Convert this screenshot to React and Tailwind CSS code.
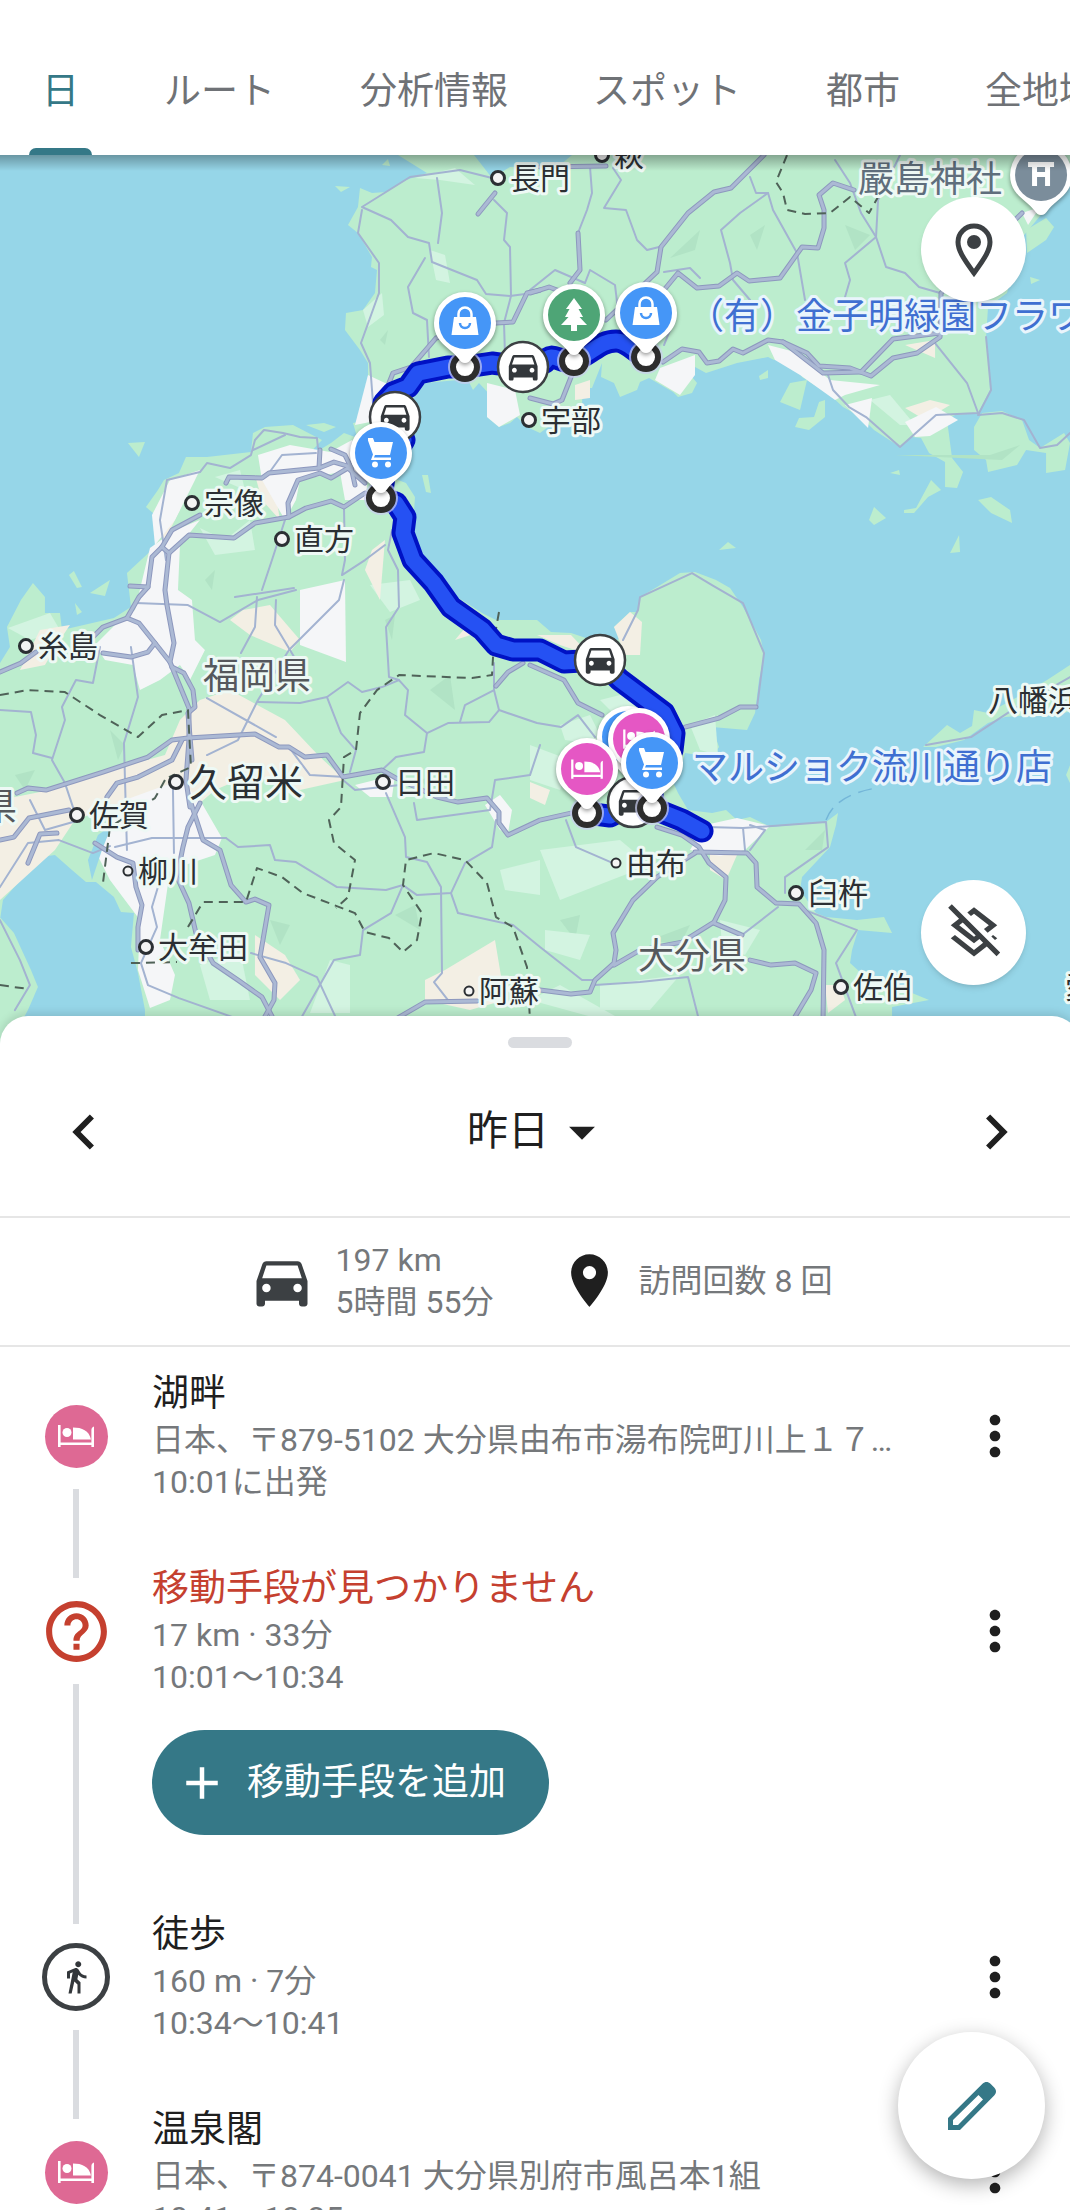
import {
  MdAdd, MdArrowDropDown, MdChevronLeft, MdChevronRight, MdDirectionsCar, MdDirectionsWalk,
  MdHelpOutline, MdLocationOn, MdMoreVert, MdOutlineLayersClear,
} from 'react-icons/md';

const TABS = ['日', 'ルート', '分析情報', 'スポット', '都市', '全地域'];

const TIMELINE = [
  { kind: 'hotel', title: '湖畔', lines: ['日本、〒879-5102 大分県由布市湯布院町川上１７…', '10:01に出発'] },
  { kind: 'unknown', title: '移動手段が見つかりません', lines: ['17 km · 33分', '10:01〜10:34'], action: '移動手段を追加' },
  { kind: 'walk', title: '徒歩', lines: ['160 m · 7分', '10:34〜10:41'] },
  { kind: 'hotel', title: '温泉閣', lines: ['日本、〒874-0041 大分県別府市風呂本1組', '10:41〜18:35'] },
];

/* ---------- map data ---------- */

const LAND = [
  // Yamaguchi
  '398,155 427,173 406,180 386,192 372,193 360,188 358,207 348,225 358,233 372,257 371,267 377,270 375,293 363,310 346,313 345,330 360,350 368,363 368,383 372,403 370,420 353,423 358,440 385,440 405,410 425,383 458,380 468,380 473,390 479,383 492,397 487,417 499,427 510,423 517,417 527,427 540,433 552,424 564,413 582,403 583,388 592,388 602,363 601,377 614,383 620,397 637,390 640,382 649,378 673,392 678,397 692,393 697,383 692,377 695,367 706,373 737,363 768,357 774,360 792,358 802,377 830,395 843,407 861,417 874,430 900,447 912,437 921,438 929,453 945,462 945,487 957,488 963,472 952,458 947,420 955,415 978,413 990,390 988,357 986,337 988,307 1007,293 1020,240 1070,180 1070,155 572,155 560,165 510,167 492,178 474,155',
  // Kyushu
  '355,437 344,433 331,443 303,460 322,440 293,425 265,427 253,433 251,452 207,457 186,457 179,473 164,480 158,490 146,507 153,513 155,530 155,547 127,573 131,607 114,618 62,630 60,613 45,613 45,597 33,583 21,600 7,627 10,647 0,663 0,920 3,900 41,857 55,855 72,870 86,882 96,882 114,897 121,912 134,913 131,947 138,973 145,1010 145,1061 892,1061 892,1007 929,1000 912,993 861,973 850,963 852,950 858,930 892,933 884,917 857,920 826,917 816,913 800,890 802,877 830,847 836,825 838,813 826,822 771,827 750,817 737,820 726,810 712,813 688,810 678,793 672,780 681,767 685,753 712,757 719,747 712,727 747,730 755,713 759,680 764,655 761,640 743,607 730,588 716,580 695,572 680,573 657,587 640,597 638,612 630,612 614,627 621,637 613,643 592,640 571,633 551,632 537,620 496,620 482,613 451,593 424,560 413,527 415,497 406,483 372,470',
  // Shimabara, Sadamisaki, Yashiro
  '0,917 14,933 31,970 38,987 28,1010 0,1061',
  '923,747 947,725 960,733 972,726 974,710 988,713 1012,700 1047,680 1070,665 1070,712 1005,717 988,723 964,740 936,747',
  '974,427 982,413 1002,411 1022,420 1029,440 1040,448 1064,433 1070,443 1065,470 1046,473 1046,453 1026,450 1017,465 988,472 986,460 974,450',
  // small islands
  '978,500 991,497 1010,510 1012,523 991,513', '869,520 874,507 886,518 874,525',
  '904,510 916,508 931,480 941,490 928,497 914,513 904,513', '890,473 899,470 900,475',
  '950,553 959,535 960,552', '719,550 728,542 736,548', '780,402 790,383 807,380 800,410',
  '795,427 799,418 814,417 819,402 825,400 825,417 809,430', '759,376 768,370 768,378 760,380',
  '1026,230 1046,218 1054,227 1046,240 1027,253', '128,443 145,442 139,457', '306,425 324,423 336,427 324,432',
  '422,475 428,475 431,493 426,492', '335,186 350,187 341,192', '382,165 388,159 390,166',
  '69,575 74,571 82,587 77,588', '75,603 82,612 77,615', '1030,277 1040,280 1031,284', '90,593 110,580 105,596', '1066,775 1070,765 1070,783',
];

// towns and plains
const URBAN = [
  '258,455 290,445 330,452 352,440 368,470 366,500 345,500 340,472 300,480 296,500 285,520 262,480',
  '150,548 175,530 200,520 180,545 178,590 192,600 195,640 205,650 190,680 180,665 160,680 140,690 133,665 105,660 95,645 115,625 135,610',
  '125,800 180,780 200,800 222,838 215,855 170,870 165,905 160,940 175,975 170,1000 150,1008 138,970 140,920 110,880 95,850',
  '705,825 737,818 770,826 745,850 720,856 690,850', '300,590 345,580 346,662 300,645',
  '768,345 795,352 830,380 880,385 845,395 835,400 800,375 775,360', '845,405 872,398 868,428', '905,422 936,407 958,420 930,436 915,437',
  '660,368 695,355 695,375 680,395 655,380', '487,383 515,390 520,415 499,427 487,417', '368,375 400,390 380,420 355,425', '1022,213 1040,207 1028,225',
  '500,795 485,805 500,830 508,833 512,810', '355,785 395,775 392,797 370,797', '170,480 200,470 175,520 155,545 152,515',
];
const CREAM = [
  '0,800 50,790 110,770 165,755 180,720 200,700 230,690 285,720 318,755 345,780 300,790 250,775 215,790 200,803 130,800 75,820 55,850 0,900',
  '70,625 60,640 45,665 20,670 40,630', '243,610 270,605 300,640 290,652 250,635 230,620', '480,632 455,640 470,622',
  '425,980 445,970 495,940 505,1000 470,1010 425,1000', '255,935 285,955 300,980 280,1000 255,975',
  '614,627 630,612 642,622 640,655 625,655', '530,782 550,790 545,805 530,798', '825,985 840,985 845,1000 828,1013',
  '710,850 737,855 726,880 710,870', '537,635 571,635 590,655 560,645', '905,408 930,400 950,405 925,420', '255,475 275,490 280,520 262,500',
  '575,385 590,380 590,398 575,400', '905,345 935,340 935,358', '165,500 180,510 165,540 157,530', '372,550 385,540 380,600 365,570',
];
const PALE = [
  '415,178 455,168 475,185 440,180', '363,310 382,293 384,315 368,327', '430,250 445,255 450,283 436,280', '215,477 240,470 245,490',
  '200,528 225,540 250,520 255,550 215,555', '8,628 50,613 60,630 30,640', '370,585 410,580 420,600 390,612', '560,725 590,715 605,745 565,740',
  '530,745 570,760 560,790 530,780', '540,850 620,840 650,865 560,900', '545,930 590,935 580,960 545,950', '600,985 680,975 650,1010 600,1010',
  '690,725 715,715 718,755 700,750', '870,400 890,395 915,425 900,425', '500,870 540,860 540,895 505,890', '640,1030 530,1000 560,985',
  '200,965 240,950 250,1000 210,1000', '720,920 760,930 745,955 722,945', '330,960 350,965 350,1013 310,1013', '600,700 640,690 650,715 620,720',
];
const SHADE = [
  '670,258 700,230 695,250', '845,225 870,235 855,250', '380,340 388,330 385,345', '750,235 765,225 757,250', '895,455 990,455 1020,445 1002,460',
  '205,580 215,570 212,590', '385,620 395,615 392,640', '430,690 450,675 455,710', '110,730 125,745 118,760', '15,775 35,770 25,790',
  '420,780 450,770 440,800', '270,920 290,925 280,945', '395,915 415,905 420,930', '805,850 825,830 822,850', '650,940 690,925 680,945', '560,920 580,915 575,940',
];

const MAJOR_ROADS = [
  '540,290 527,293 513,322 496,323 470,330 436,338 411,367 393,373 389,383', '495,193 478,214',
  '764,155 731,188 714,192 688,213 661,247 657,272 606,320',
  '664,290 678,273 697,288 719,286 737,273 749,281 780,278 802,247 818,248 824,228 824,210 819,195 833,183 854,190',
  '663,362 682,349 699,352 707,363 719,361 733,349 743,353 768,340 783,342 807,353 819,366 850,368 871,376 893,358 917,353 940,337 941,293 1022,213',
  '783,342 823,373 861,372 893,339 940,333', '578,233 580,270 570,283', '530,293 549,287 565,293', '540,167 606,166', '530,398 553,404 562,400 573,372',
  '226,483 229,477 262,478 269,473 319,468 334,462 351,467', '289,517 288,503 298,480 320,473 331,478 348,468 365,483', '320,450 319,468', '331,449 345,455 351,467 355,485',
  '162,547 172,530 200,515', '162,547 169,553 189,535 234,538 255,523 289,517 306,508 331,501 344,507 365,493',
  '169,553 165,590 167,605 174,643 170,662 189,708 189,740 186,780 190,807',
  '162,547 152,557 148,587 139,597 127,618 139,623 155,643 170,662', '172,667 184,673 193,690 195,707 188,713 192,760', '130,586 148,587',
  '127,618 103,627 93,637', '103,653 131,657 148,652 155,643', '0,672 21,663 36,652',
  '17,793 28,788 46,790 103,772 148,757 172,740 188,738 255,734 279,747 289,747 305,757 327,755 343,777 382,770 396,778 437,797 458,802 487,798 499,812 499,823 508,835 540,820 571,813',
  '0,840 14,837 29,818 69,810', '107,797 117,783 138,777 172,760 182,740',
  '189,797 203,840 220,850 231,885 246,902 255,899 269,905 260,957 275,983 274,1000 263,1020',
  '200,803 188,827 183,847 177,877 189,903 196,933 213,963 238,980 262,997 274,1020',
  '95,843 117,857 133,863 136,887 142,905 138,927 138,950', '57,833 40,834 28,863', '394,1020 425,1002 477,1001',
  '540,990 571,994 590,992 595,980 614,963 616,950 613,933 633,900 657,877 695,853',
  '614,965 640,950 682,942 714,922 725,900 726,877 709,863 699,847 682,835 657,827', '714,923 742,935',
  '695,852 747,853 756,863 757,887 776,903 799,904 816,923 824,950 823,1020', '750,960 771,965 795,963 816,973 811,990 793,1020',
  '530,665 564,680 578,703 602,715', '685,727 719,718 740,707 756,707', '496,686 508,672 523,663',
];
const MINOR_ROADS = [
  '492,178 460,170 410,177 362,207 391,220 408,237 429,243 432,262 477,280 486,294 510,296 540,292', '437,178 442,213 438,243',
  '362,210 358,233 379,263 379,293 361,343 370,363 373,403', '425,258 408,287 413,313 427,320 429,357', '494,200 507,213 504,240 510,247 511,296 504,323 505,355',
  '590,167 592,193 587,210 578,233', '613,168 621,180 604,208 626,210 637,240 647,250 659,247', '530,290 555,270 585,283 590,270 615,285 618,310',
  '750,177 756,193 768,193 740,213 721,230 730,263 733,280 750,300', '768,193 773,210 797,253 805,300', '664,272 690,268 700,278', '664,345 672,325',
  '835,160 850,183 861,213 876,237 845,263 850,280 845,297', '900,155 878,200 876,237 886,267 905,273 919,287 940,293',
  '828,375 833,390 849,407 866,417 900,447 936,415 978,413 967,383 935,343', '986,337 991,390 978,415 1002,413 1024,420 1040,448 1057,445 1070,433',
  '166,560 160,520 167,480 200,472 207,463 230,468 251,455 255,440 264,430 283,433 300,437 317,438 318,448', '253,450 285,435', '269,473 282,455 316,453',
  '136,603 188,605 220,622 258,600 296,590', '235,597 294,588', '257,597 255,627 241,653', '344,580 339,600 289,650 258,700 238,740 207,755',
  '207,698 276,737', '258,702 300,703 327,697 348,682 362,692 382,687 399,680 389,677 386,627 399,607 398,570 388,550 392,530', '327,697 341,733 356,750 350,772',
  '344,507 345,560 342,575 365,560 385,545', '262,590 272,560 285,520', '276,600 275,625 296,660',
  '399,680 408,690 405,715 427,733 424,752 396,757 382,770', '427,733 448,723 489,722 499,710 537,723 561,727 578,715 595,737', '494,663 494,690 499,710', '494,690 465,705 460,722',
  '386,793 405,837 406,857 427,862 441,887 442,973 434,982 448,1000', '540,745 530,775 495,780 490,810 417,820 414,803',
  '226,838 238,847 270,845 275,860 296,862 337,887 386,890 403,885 417,895 451,893 465,863 492,847 496,820',
  '451,893 458,913 513,925 540,947 582,980 595,980', '403,885 391,913 363,930 360,955 334,960 300,1020', '251,953 286,963 317,977 337,1020',
  '141,963 148,985 179,998 241,1020', '100,647 93,683 76,680 62,707 65,720 52,760 65,783 74,810', '0,710 31,712 36,735 33,753 52,758',
  '131,647 138,697 124,743 127,850', '173,790 174,853', '115,847 152,838 226,838', '0,887 28,843 59,840 93,853 110,846', '158,887 152,907 157,927 141,963', '30,800 45,830 80,820',
  '566,820 576,847 613,863', '623,640 638,610 640,597 692,573 712,585 743,603 764,653 757,707', '706,827 743,828 826,822 828,847 785,877 785,893',
  '750,850 765,830 750,825', '743,828 745,850', '805,910 857,930 836,963 857,1020', '595,985 640,982 688,977 699,1020', '742,935 778,907', '926,745 971,737 1012,710 1070,677',
  '0,920 20,960 30,985 15,1010', '343,780 355,790 400,785', '289,747 310,775 345,777',
];
const BORDERS = [
  '787,155 776,182 783,193 787,210 805,214 830,213 850,197 869,213 878,197',
  '0,695 28,690 65,692 100,715 138,737 162,715 188,710 191,767 169,777', '165,780 155,798 110,827 103,883',
  '499,612 494,640 492,675 472,678 399,675 377,690 360,713 356,750 344,757 341,807 329,820 334,843 355,860 348,897 336,908',
  '188,927 203,902 246,902 257,868 282,877 303,893 355,913 365,932 389,938 403,952 417,940 422,913 403,885 406,860 434,853 465,860 487,883 496,917 513,927 527,967 530,1020',
  '0,985 29,989', '131,963 177,962',
];

const TOWNS = [
  { x: 498, y: 178, name: '長門' }, { x: 602, y: 155, name: '萩' }, { x: 529, y: 420, name: '宇部' },
  { x: 192, y: 503, name: '宗像' }, { x: 282, y: 539, name: '直方' }, { x: 26, y: 646, name: '糸島' },
  { x: 77, y: 815, name: '佐賀' }, { x: 146, y: 947, name: '大牟田' }, { x: 383, y: 782, name: '日田' },
  { x: 796, y: 893, name: '臼杵' }, { x: 841, y: 987, name: '佐伯' },
  { x: 128, y: 871, name: '柳川', small: true }, { x: 469, y: 991, name: '阿蘇', small: true }, { x: 616, y: 863, name: '由布', small: true },
];

const ROUTE = 'M646 357C634 352 628 341 616 341C600 341 594 352 574 361C560 364 552 350 545 362L523 367L492 363L465 367L448 367L418 373L408 387L393 393L384 403L395 417L404 440L385 470L381 498L396 503L405 517L403 533L413 560L434 583L451 607L482 629L496 645L513 650L540 650L564 662L600 660L620 680L664 713L674 733L672 750L652 785L652 808';
const ROUTE_SOUTH = 'M587 813L610 816L633 804L652 808L682 820L702 831';

/* ---------- map pieces ---------- */

const CAR = 'M18.92 6.01C18.72 5.42 18.16 5 17.5 5h-11c-.66 0-1.21.42-1.42 1.01L3 12v8c0 .55.45 1 1 1h1c.55 0 1-.45 1-1v-1h12v1c0 .55.45 1 1 1h1c.55 0 1-.45 1-1v-8l-2.08-5.99zM6.5 16c-.83 0-1.5-.67-1.5-1.5S5.67 13 6.5 13s1.5.67 1.5 1.5S7.33 16 6.5 16zm11 0c-.83 0-1.5-.67-1.5-1.5s.67-1.5 1.5-1.5 1.5.67 1.5 1.5-.67 1.5-1.5 1.5zM5 11l1.5-4.500h11L19 11H5z';

function BedShape() {
  return (
    <g fill="currentColor">
      <path d="M-18-11h2.600V6.500h30.800V-6C15.400-8 16.500-9 18-9.500V11h-2.600V9h-30.800v2H-18z" />
      <circle cx="-9" cy="-3.500" r="4.500" />
      <path d="M-3-8.500C6-8.500 13-5.500 15 3.500H-3z" />
    </g>
  );
}

function PinGlyph({ kind }) {
  if (kind === 'bag') {
    return (
      <g transform="translate(0 -1)">
        <path d="M-11-5h22l2.500 18h-27z" fill="#fff" />
        <path d="M-6.500-5v-3a6.500 6.500 0 0 1 13 0v3" fill="none" stroke="#fff" strokeWidth="2.500" />
        <path d="M-5 1a5 5 0 0 0 10 0" fill="none" stroke="#4596f7" strokeWidth="2.500" />
      </g>
    );
  }
  if (kind === 'tree') return <path d="M0-17L8-6H4.500L9 2H5.500L13 10H3v6h-6v-6h-10L-5.500 2H-9L-4.500-6H-8z" fill="#fff" />;
  if (kind === 'bed') return <g className="text-white" transform="scale(.88)"><BedShape /></g>;
  if (kind === 'torii') return <path d="M-13-13h26v5H9V11H4V2H-4v9h-5V-8h-4zM-4-8v5h8v-5z" fill="#fff" fillRule="evenodd" />;
  return (
    <g fill="#fff">
      <path d="M-13-15h5l1.500 4H12L9 2H-6L-7 4.500H10v2.500h-20l2-5.500-5-14z" />
      <circle cx="-6" cy="11.500" r="3" />
      <circle cx="7" cy="11.500" r="3" />
    </g>
  );
}

function Pin({ x, y, color, kind }) {
  return (
    <g transform={`translate(${x} ${y})`}>
      <g className="drop-shadow-[0_2px_2px_rgba(0,0,0,0.4)]">
        <path d="M0 40C-3 40-5 38-7 35C-16 24-31 19-31 0A31 31 0 0 1 31 0C31 19 16 24 7 35C5 38 3 40 0 40z" fill="#fff" />
      </g>
      <circle r="26" fill={color} />
      <PinGlyph kind={kind} />
    </g>
  );
}

function Stop({ x, y }) {
  return (
    <g>
      <circle cx={x} cy={y} r="17" fill="#c9cdf0" opacity=".7" />
      <circle cx={x} cy={y} r="12" fill="#fff" stroke="#2d2d2d" strokeWidth="6" />
    </g>
  );
}

function CarMark({ x, y }) {
  return (
    <g transform={`translate(${x} ${y})`}>
      <circle r="25" fill="#fff" stroke="#3c4043" strokeWidth="2.500" />
      <path d={CAR} fill="#33373b" transform="translate(-19 -20) scale(1.600)" />
    </g>
  );
}

function Lines({ data, color, width, dash }) {
  return (
    <g fill="none" stroke={color} strokeWidth={width} strokeLinejoin="round" strokeLinecap={dash ? 'butt' : 'round'} strokeDasharray={dash}>
      {data.map(p => <polyline key={p} points={p} />)}
    </g>
  );
}

function Areas({ data, color }) {
  return <g fill={color}>{data.map(p => <polygon key={p} points={p} />)}</g>;
}

function MapView() {
  return (
    <svg viewBox="0 155 1070 906" preserveAspectRatio="xMidYMin slice" className="block h-full w-full font-['Noto_Sans_CJK_JP',sans-serif]">
      <rect y="155" width="1070" height="906" fill="#96d6e8" />
      <Areas data={LAND} color="#bcedce" />
      <Areas data={SHADE} color="#b1e3c5" />
      <Areas data={PALE} color="#d3f4e1" />
      <Areas data={CREAM} color="#f3efe4" />
      <Areas data={URBAN} color="#f5f6f8" />
      <path d="M88 860L98 835L112 825L102 850L92 880zM134 625L150 645M192 1018l12-18" fill="#96d6e8" />
      <Lines data={MINOR_ROADS} color="#a3b3d1" width="2" />
      <Lines data={MAJOR_ROADS} color="#8d98be" width="5" />
      <Lines data={MAJOR_ROADS} color="#abb9d4" width="3" />
      <Lines data={BORDERS} color="#4f6258" width="2" dash="9 6" />
      <path d="M826 820Q835 795 876 788" fill="none" stroke="#74b6d8" strokeWidth="1.500" strokeDasharray="14 8" />

      {/* driven route */}
      <g fill="none" strokeLinejoin="round" strokeLinecap="round">
        <path d={`${ROUTE}${ROUTE_SOUTH}`} stroke="#0012c4" strokeWidth="23" />
        <path d={`${ROUTE}${ROUTE_SOUTH}`} stroke="#2551f3" strokeWidth="15" />
      </g>

      {/* place names */}
      <g fontSize="30" fill="#2b2f33" stroke="#eef9f5" strokeWidth="6" strokeLinejoin="round" paintOrder="stroke">
        {TOWNS.map(t => (
          <g key={t.name}>
            <circle cx={t.x} cy={t.y} r={t.small ? 4.5 : 6.5} fill="#f4f4f4" stroke="#2b2f33" strokeWidth={t.small ? 2 : 3} paintOrder="normal" />
            <text x={t.x + (t.small ? 10 : 12)} y={t.y + 11}>{t.name}</text>
          </g>
        ))}
        <text x="988" y="711">八幡浜</text>
        <text x="1065" y="998">愛媛</text>
        <circle cx="176" cy="782" r="6.500" fill="#f4f4f4" stroke="#2b2f33" strokeWidth="3" paintOrder="normal" />
        <text x="189" y="796" fontSize="38">久留米</text>
        <g fontSize="36" fill="#55585c">
          <text x="203" y="689">福岡県</text>
          <text x="638" y="969">大分県</text>
          <text x="-19" y="820">県</text>
          <text x="858" y="192" fill="#5f6e7c">嚴島神社</text>
          <g fill="#3f6fd1" stroke="#e9f5fc">
            <text x="688" y="329">（有）金子明緑園フラワー</text>
            <text x="692" y="780">マルショク流川通り店</text>
          </g>
        </g>
      </g>

      <Stop x={465} y={367} /><Stop x={574} y={361} /><Stop x={646} y={357} />
      <CarMark x={523} y={367} />
      <CarMark x={395} y={417} />
      <Stop x={381} y={498} />
      <CarMark x={600} y={660} />
      <CarMark x={633} y={802} />
      <Stop x={587} y={813} /><Stop x={652} y={808} />
      <Pin x={1041} y={175} color="#7b8d9b" kind="torii" />
      <Pin x={465} y={323} color="#4596f7" kind="bag" />
      <Pin x={574} y={315} color="#4ea576" kind="tree" />
      <Pin x={646} y={313} color="#4596f7" kind="bag" />
      <Pin x={381} y={453} color="#4596f7" kind="cart" />
      <Pin x={628} y={737} color="#4596f7" kind="cart" />
      <Pin x={639} y={739} color="#e557c4" kind="bed" />
      <Pin x={587} y={769} color="#e557c4" kind="bed" />
      <Pin x={652} y={763} color="#4596f7" kind="cart" />
    </svg>
  );
}

/* ---------- timeline ---------- */

function RailIcon({ kind }) {
  if (kind === 'unknown') return <MdHelpOutline className="size-[73px] text-[#c5402f]" />;
  if (kind === 'walk') {
    return (
      <span className="flex size-[68px] items-center justify-center rounded-full border-[5px] border-[#3c4043]">
        <MdDirectionsWalk className="size-9 text-[#33373b]" />
      </span>
    );
  }
  return (
    <span className="flex size-[63px] items-center justify-center rounded-full bg-[#de6994] text-white">
      <svg viewBox="-18 -12 36 24" className="w-9"><BedShape /></svg>
    </span>
  );
}

function TimelineItem({ item }) {
  return (
    <li className="flex">
      <div className="flex w-[152px] shrink-0 flex-col items-center">
        <div className="flex h-[106px] items-center justify-center"><RailIcon kind={item.kind} /></div>
        <div className="w-[6px] flex-1 bg-[#dadce0]" />
      </div>
      <div className="-mt-4 min-w-0 flex-1 pb-[75px]">
        <h2 className={`pt-[2px] text-[37px] leading-[50px] ${item.kind === 'unknown' ? 'text-[#c5402f]' : 'text-[#1f1f1f]'}`}>{item.title}</h2>
        <div className="text-[32px] leading-[42px] text-[#75787b]">
          {item.lines.map(line => <p key={line} className="truncate">{line}</p>)}
        </div>
        {item.action && (
          <div className="pt-8 pb-[14px]">
            <button type="button" className="flex h-[105px] items-center gap-[18px] rounded-full bg-[#357887] pr-[43px] pl-[23px] text-[37px] text-white">
              <MdAdd className="size-[54px]" />
              {item.action}
            </button>
          </div>
        )}
      </div>
      <button type="button" aria-label="その他" className="mr-[53px] flex h-[106px] w-16 shrink-0 items-center justify-center text-[#1f1f1f]">
        <MdMoreVert className="size-16" />
      </button>
    </li>
  );
}

export default function App() {
  return (
    <div className="relative flex h-screen flex-col overflow-hidden bg-white font-[Roboto,'Noto_Sans_CJK_JP',sans-serif]">
      <nav className="relative z-10 flex h-[155px] shrink-0 items-end gap-[85px] overflow-hidden bg-white pl-[42px]">
        {TABS.map((tab, i) => (
          <button key={tab} type="button"
            className={`relative h-[126px] shrink-0 text-[37px] whitespace-nowrap ${i === 0 ? 'text-[#357887]' : 'text-[#6f7276]'}`}>
            {tab}
            {i === 0 && <span className="absolute -inset-x-[13px] bottom-0 h-[7px] rounded-t-lg bg-[#357887]" />}
          </button>
        ))}
      </nav>

      <div className="relative h-[41vh] shrink-0">
        <MapView />
        <div className="absolute inset-x-0 top-0 h-4 bg-linear-to-b from-black/30 to-transparent" />
        <button type="button" aria-label="現在地" className="absolute top-[42px] right-11 flex size-[105px] items-center justify-center rounded-full bg-white text-[#3c4043] shadow-md">
          <svg viewBox="0 0 38 54" className="h-[54px]" fill="none" stroke="currentColor">
            <path d="M19 50C8 35 3 27 3 19a16 16 0 0 1 32 0c0 8-5 16-16 31z" strokeWidth="5" />
            <circle cx="19" cy="19" r="7" fill="currentColor" stroke="none" />
          </svg>
        </button>
        <button type="button" aria-label="レイヤを非表示" className="absolute right-11 bottom-[76px] flex size-[105px] items-center justify-center rounded-full bg-white text-[#3c4043] shadow-md">
          <MdOutlineLayersClear className="size-[62px]" />
        </button>
      </div>

      {/* the sheet runs a little past the right edge */}
      <section className="relative -mt-[45px] -mr-[10px] flex min-h-0 flex-1 flex-col rounded-t-[28px] bg-white shadow-[0_-3px_8px_rgba(0,0,0,0.12)]">
        <div className="mx-auto mt-[21px] h-[11px] w-16 shrink-0 rounded-full bg-[#dadce0]" />
        <div className="flex h-[168px] shrink-0 items-center justify-between px-[49px] text-[#1f1f1f]">
          <button type="button" aria-label="前の日"><MdChevronLeft className="size-[70px]" /></button>
          <button type="button" className="flex items-center gap-[2px] text-[41px]">
            昨日
            <MdArrowDropDown className="size-[62px]" />
          </button>
          <button type="button" aria-label="次の日"><MdChevronRight className="size-[70px]" /></button>
        </div>

        {/* day totals */}
        <div className="flex h-[131px] shrink-0 items-center justify-center border-y-2 border-[#e6e6e6] pb-[2px] text-[32px] leading-[42px] text-[#75787b]">
          <MdDirectionsCar className="mr-5 size-[68px] text-[#3c4043]" />
          <p>197 km<br />5時間 55分</p>
          <MdLocationOn className="mr-[18px] ml-[64px] size-[63px] text-[#1f1f1f]" />
          <p>訪問回数 8 回</p>
        </div>

        <ul className="min-h-0 flex-1 overflow-y-auto pt-9 [scrollbar-width:none]">
          {TIMELINE.map(item => <TimelineItem key={item.title} item={item} />)}
        </ul>
      </section>

      <button type="button" aria-label="編集" className="absolute right-[25px] bottom-[31px] flex size-[147px] items-center justify-center rounded-full bg-white text-[#357887] shadow-[0_6px_20px_rgba(0,0,0,0.3)]">
        <svg viewBox="0 0 48 48" className="size-12" fill="currentColor">
          <path fillRule="evenodd" d="M0 36L34.500 1.800c2.500-2.400 5.500-2.400 8 0l3.700 3.700c2.400 2.500 2.400 5.500 0 8L12 48H0zM5 38v5h5l25-25.500L30.500 13z" />
        </svg>
      </button>
    </div>
  );
}
